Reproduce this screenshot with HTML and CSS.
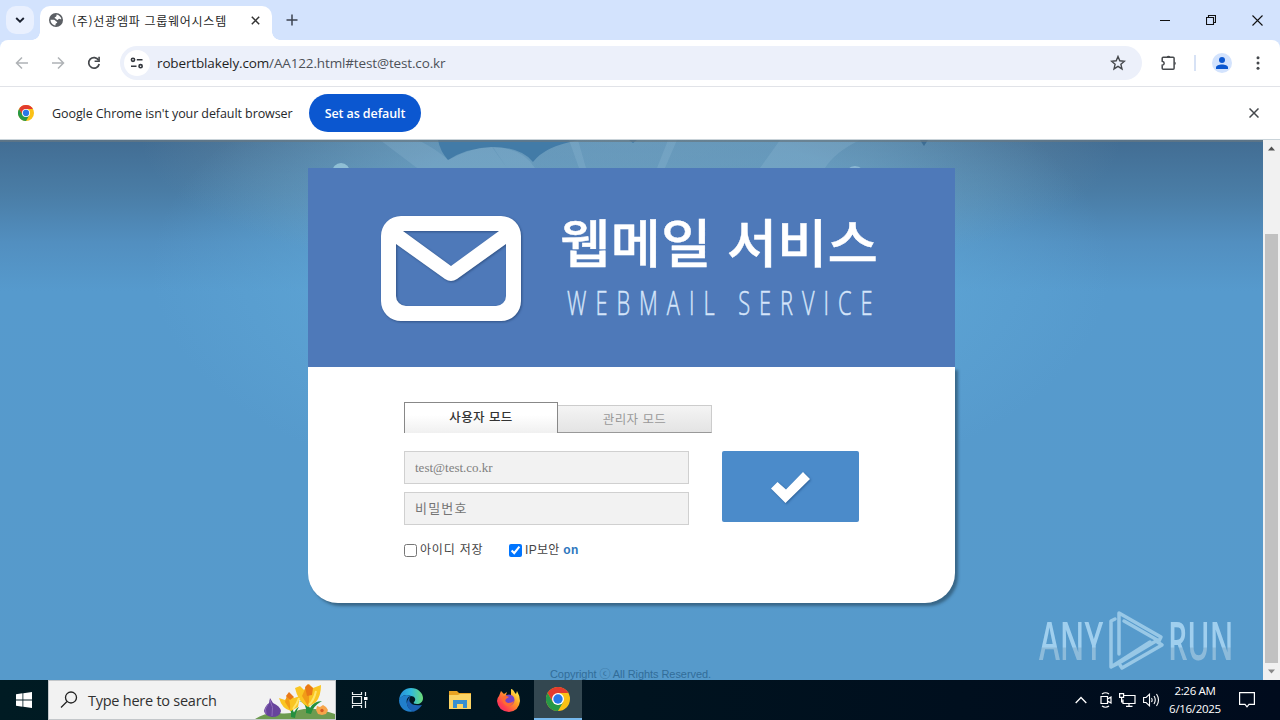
FILE: index.html
```html
<!DOCTYPE html>
<html lang="ko">
<head>
    <meta charset="UTF-8">
    <title>(주)선광엠파 그룹웨어시스템</title>
    <link rel="stylesheet" href="styles.css">
</head>
<body>
<div class="tabstrip">
    <div class="tab-search">
        <svg width="10" height="6" viewBox="0 0 10 6"><path d="M1.2 1l3.8 3.6L8.800 1" fill="none" stroke="#1b2230" stroke-width="1.900"/></svg>
    </div>
    <div class="tab">
        <svg class="globe" width="14" height="14" viewBox="0 0 14 14"><circle cx="7" cy="7" r="7" fill="#5b5f64"/><path d="M7.500 1.500C10 2 12 3.800 12.400 6.200c-1.200.3-1.600-.5-2.400-.4-.7 0-.4 1.200-1.500 1.200C7.300 7 7.500 5.700 6.300 5.500 5.500 5.300 5.400 4.300 6.300 4c1-.2 1.400-1.200 1.200-2.500zM1.500 6.700h3.300c1.400 0 1.500 1.500 2.600 1.700 1.200.3 1 1.600-.1 1.800-.8.2-.7 1.200-.9 2.200C3.600 12 1.500 9.600 1.500 6.700z" fill="#fff"/></svg>
        <span class="tab-title">(주)선광엠파 그룹웨어시스템</span>
        <svg width="9" height="9" viewBox="0 0 9 9"><path d="M.8.800l7.400 7.400M8.200.800L.8 8.200" stroke="#333" stroke-width="1.500"/></svg>
    </div>
    <svg class="new-tab" width="12" height="12" viewBox="0 0 12 12"><path d="M6 .5v11M.5 6h11" stroke="#3c4350" stroke-width="1.500"/></svg>
    <div class="window-buttons">
        <svg width="10" height="10" viewBox="0 0 10 10"><path d="M0 5.500h10" stroke="#111"/></svg>
        <svg width="10" height="10" viewBox="0 0 10 10"><path d="M.5 2.500h7v7h-7zM2.500 2.500v-2h7v7h-2" fill="none" stroke="#111" stroke-width="1.100"/></svg>
        <svg width="11" height="11" viewBox="0 0 11 11"><path d="M.5.500l10 10M10.500.500l-10 10" stroke="#111" stroke-width="1.100"/></svg>
    </div>
</div>
<div class="toolbar">
    <div class="nav">
        <svg width="14" height="14" viewBox="0 0 14 14"><path d="M7 1.500L1.500 7 7 12.500M1.500 7H13" fill="none" stroke="#afb2b6" stroke-width="1.500"/></svg>
        <svg width="14" height="14" viewBox="0 0 14 14"><path d="M7 1.500L12.500 7 7 12.500M12.500 7H1" fill="none" stroke="#afb2b6" stroke-width="1.500"/></svg>
        <svg width="14" height="14" viewBox="0 0 14 14"><path d="M11.600 4.200A5.300 5.300 0 1 0 12.200 8" fill="none" stroke="#45484c" stroke-width="1.700"/><path d="M12.900.800v5.300H7.600V4.500h3.700V.800z" fill="#45484c"/></svg>
    </div>
    <div class="address">
        <span class="site-info">
            <svg width="14" height="12" viewBox="0 0 14 12"><g fill="none" stroke="#33373d" stroke-width="1.600"><circle cx="3" cy="2.800" r="1.600"/><path d="M6.800 2.800h5.700M1 9.200h5.500"/><circle cx="10.600" cy="9.200" r="1.600"/></g></svg>
        </span>
        <span class="url">robertblakely.com<span>/AA122.html#test@test.co.kr</span></span>
        <svg width="16" height="16" viewBox="0 0 16 16"><path d="M8 1.500l1.800 4.300 4.700.4-3.600 3.100 1.100 4.600L8 11.400l-4 2.500 1.100-4.600L1.500 6.200l4.700-.4z" fill="none" stroke="#45484c" stroke-width="1.400"/></svg>
    </div>
    <svg class="puzzle" width="18" height="18" viewBox="0 0 18 18"><path d="M3.200 3.300h9.900c.6 0 1 .4 1 1v9.900c0 .6-.4 1-1 1H3.200c-.6 0-1-.4-1-1v-3c1.300-.2 2-1 2-2s-.7-1.800-2-2V4.300c0-.6.4-1 1-1z" fill="none" stroke="#45484c" stroke-width="1.500"/><path d="M6.700 3a1.900 1.900 0 0 1 3.600 0zM14.500 7.400a1.900 1.900 0 0 1 0 3.600z" fill="#45484c"/></svg>
    <span class="divider"></span>
    <svg class="avatar" width="20" height="20" viewBox="0 0 20 20"><circle cx="10" cy="10" r="10" fill="#d3e3fd"/><circle cx="10" cy="7" r="3" fill="#0b57d0"/><path d="M4 16v-1.500c0-4 12-4 12 0V16z" fill="#0b57d0"/></svg>
    <svg class="menu" width="4" height="14" viewBox="0 0 4 14"><g fill="#45484c"><circle cx="2" cy="1.700" r="1.500"/><circle cx="2" cy="7" r="1.500"/><circle cx="2" cy="12.300" r="1.500"/></g></svg>
</div>
<div class="infobar">
    <svg width="16" height="16" viewBox="0 0 24 24"><circle cx="12" cy="12" r="12" fill="#fbc116"/><path d="M1.600 6L6.800 15 12 6h10.400A12 12 0 0 0 1.600 6z" fill="#e33b2e"/><path d="M1.600 6L6.800 15l5.200 3 5.200-3L12 24A12 12 0 0 1 1.600 6z" fill="#279847"/><circle cx="12" cy="12" r="6" fill="#fff"/><circle cx="12" cy="12" r="4.700" fill="#2878e8"/></svg>
    <span class="info-text">Google Chrome isn't your default browser</span>
    <button class="default-btn">Set as default</button>
    <svg class="info-close" width="10" height="10" viewBox="0 0 10 10"><path d="M.5.500l9 9M9.500.500l-9 9" stroke="#45484c" stroke-width="1.500"/></svg>
</div>
<div class="viewport">
    <div class="page">
        <svg class="sky" width="1263" height="540" viewBox="0 0 1263 540">
            <defs>
                <linearGradient id="sky" x1="0" y1="0" x2="0" y2="1">
                    <stop offset="0" stop-color="#426d93"/>
                    <stop offset=".1" stop-color="#4a7da6"/>
                    <stop offset=".19" stop-color="#528fc0"/>
                    <stop offset=".28" stop-color="#569acd"/>
                    <stop offset="1" stop-color="#569acb"/>
                </linearGradient>
                <radialGradient id="glow" gradientUnits="userSpaceOnUse" cx="631" cy="130" r="480" gradientTransform="translate(0 65) scale(1 .5)">
                    <stop offset=".6" stop-color="#61a9d8" stop-opacity=".55"/>
                    <stop offset="1" stop-color="#61a9d8" stop-opacity="0"/>
                </radialGradient>
                <radialGradient id="haze" gradientUnits="userSpaceOnUse" cx="631" cy="0" r="490" gradientTransform="scale(1 .3)">
                    <stop offset="0" stop-color="#8babbd" stop-opacity=".38"/>
                    <stop offset=".5" stop-color="#86a8ba" stop-opacity=".34"/>
                    <stop offset=".8" stop-color="#80a3b5" stop-opacity=".18"/>
                    <stop offset="1" stop-color="#80a3b5" stop-opacity="0"/>
                </radialGradient>
            </defs>
            <rect width="1263" height="540" fill="url(#sky)"/>
            <rect width="1263" height="360" fill="url(#glow)"/>
            <rect width="1263" height="150" fill="url(#haze)"/>
            <path d="M438 0h54q-28 4-44 20-8-9-10-20zM492 0h87q-34 6-46 22-12-15-41-15-26 1-44 13 14-20 44-20zM629 0h8l-4 3z" fill="#427ba7"/>
            <g fill="#b5d6eb" opacity=".15">
                <path d="M380 0h38q20 10 30 20 24-13 44-13l15 21h-90zM493 7q30 1 42 21h-28zM569 0h9l8 28h-7zM668 0h9l-12 28h-8zM780 0h80q-25 12-35 28h-65z"/>
            </g>
            <circle cx="341" cy="32" r="9" fill="#a0cfe0" opacity=".75"/>
            <circle cx="855" cy="36" r="10" fill="#a5cde3" opacity=".6"/>
            <path d="M920 0h8l-4 6z" fill="#3d6d94"/>
            <rect width="1263" height="2" fill="#687782" opacity=".7"/>
        </svg>
        <div class="login">
            <div class="banner">
                <svg width="647" height="199" viewBox="0 0 647 199">
                    <g class="mail-icon">
                        <path fill-rule="evenodd" d="M93 48h100a20 20 0 0 1 20 20v65a20 20 0 0 1-20 20H93a20 20 0 0 1-20-20V68a20 20 0 0 1 20-20zM95 63l48 35 48-35zM88 76v52a10 10 0 0 0 10 10h90a10 10 0 0 0 10-10V76l-49 35q-6 4-12 0z" fill="#fff"/>
                    </g>
                    <text class="headline" x="252" y="95" textLength="318" lengthAdjust="spacingAndGlyphs">웹메일 서비스</text>
                    <text class="subline" transform="translate(259 147) scale(.66 1)" textLength="463">WEBMAIL SERVICE</text>
                </svg>
            </div>
            <form class="form">
                <div class="modes">
                    <a class="mode on">사용자 모드</a>
                    <a class="mode">관리자 모드</a>
                </div>
                <div class="fields">
                    <div class="inputs">
                        <input class="user-id" type="text" value="test@test.co.kr">
                        <input class="password" type="password" placeholder="비밀번호">
                    </div>
                    <button class="submit" type="button">
                        <svg width="40" height="32" viewBox="0 0 40 32"><path d="M0 17.500l6.500-6.500L15 18.500 32 1l7 7L14.500 32z" fill="#fff"/></svg>
                    </button>
                </div>
                <div class="options">
                    <label class="save-id"><input type="checkbox"><span>아이디 저장</span></label>
                    <label><input type="checkbox" checked><span>IP보안 <b>on</b></span></label>
                </div>
            </form>
        </div>
        <p class="copyright">Copyright ⓒ All Rights Reserved.</p>
        <svg class="watermark" width="204" height="90" viewBox="-4 -14 204 90">
            <defs>
                <linearGradient id="wm" x1="0" y1="0" x2="0" y2="1">
                    <stop offset=".6" stop-color="#a9d5f2"/>
                    <stop offset=".61" stop-color="#94bfdc"/>
                </linearGradient>
            </defs>
            <text transform="translate(2 50) scale(.6 1)" textLength="107" lengthAdjust="spacingAndGlyphs" fill="url(#wm)">ANY</text>
            <text transform="translate(131 50) scale(.6 1)" textLength="109" lengthAdjust="spacingAndGlyphs" fill="url(#wm)">RUN</text>
            <g fill="none" stroke="#a0cdea" stroke-width="3.500" stroke-linejoin="round" stroke-linecap="round">
                <path d="M82 44V3l42 24-2 4-35-20"/>
                <path d="M78 9l-4 2v46l39-25M74 57l8-4 37-22 6 4-40 23-2-3"/>
            </g>
        </svg>
    </div>
    <div class="scrollbar">
        <svg width="17" height="17" viewBox="0 0 17 17"><path d="M5 10.500l3.500-4 3.500 4z" fill="#505050"/></svg>
        <div class="thumb"></div>
        <svg width="17" height="17" viewBox="0 0 17 17"><path d="M5 6.500l3.500 4 3.500-4z" fill="#888"/></svg>
    </div>
</div>
<div class="taskbar">
    <div class="start">
        <svg width="16" height="16" viewBox="0 0 16 16"><path d="M0 2.200l6.500-.9v6.300H0zM7.300 1.200L16 0v7.600H7.300zM0 8.400h6.500v6.300L0 13.800zM7.300 8.400H16V16l-8.700-1.200z" fill="#fff"/></svg>
    </div>
    <div class="search">
        <svg width="18" height="18" viewBox="0 0 18 18"><circle cx="11" cy="6.500" r="5.500" fill="none" stroke="#222" stroke-width="1.300"/><path d="M7 10.500L1 16.500" stroke="#222" stroke-width="1.300"/></svg>
        <span>Type here to search</span>
        <svg class="flowers" width="80" height="38" viewBox="0 0 80 38">
            <path d="M0 38q10-7 24-6 10 2 20-3 14-4 36 4v5z" fill="#6d9b50"/>
            <path d="M15 17l3 5q7 3 8 8-1 6-9 6-7-1-8-6 1-5 5-8z" fill="#67449c"/>
            <path d="M15 19q4 7 2 16M13 23q-4 5-2 10" fill="none" stroke="#8e6cba"/>
            <path d="M36 36q1-8-5-10 7 0 8 6 2-5 5-6-3 4-4 11zM51 32q1-10-7-12 9 1 11 7 4-7 12-7-9 5-11 13z" fill="#25903f"/>
            <path d="M24 17l6 2 5-6 4 4 6-2-2 11-7 4q-9-2-12-13zM40 7l5-2 4 4 5-6 4 4 8-3q0 11-5 17l-8 5q-10-5-13-19z" fill="#fac522"/>
            <path d="M32 14q4 7 3 15l-5-8zM52 4q4 10 1 21l-6-10z" fill="#f19b17"/>
            <path d="M31 15l3-4 5 5-4 3zM50 6l3-3 5 4-1 7-5 1z" fill="#e97817"/>
            <path d="M61 10q-2 9-7 14M44 17q-2 6-6 11" fill="none" stroke="#ffe56a" stroke-width="2"/>
            <path d="M62 25l3 1 3-2 3 2 2 3-2 4-4 1-4-1-2-4z" fill="#f7a54a"/><circle cx="67" cy="29.500" r="1.700" fill="#d65c21"/>
        </svg>
    </div>
    <div class="task">
        <svg width="18" height="16" viewBox="0 0 18 16"><path d="M1.500 0v2.500h9V0M1.500 16v-2.500h9V16M1.500 4.500h9v7h-9zM14.500 0v4M14.500 9v7" fill="none" stroke="#e9eeee" stroke-width="1.200"/><path d="M13 5h3.500v3H13z" fill="#fff"/></svg>
    </div>
    <div class="task edge">
        <svg width="24" height="24" viewBox="0 0 24 24">
            <defs>
                <linearGradient id="edge" x1="0" y1="0" x2="1" y2="0"><stop stop-color="#258edc"/><stop offset=".5" stop-color="#31b9dd"/><stop offset="1" stop-color="#6bdc76"/></linearGradient>
            </defs>
            <path d="M0 12C1 4 6 0 12 0c7 0 12 5 12 10 0 4-3 6-6 6s-4-1-3-2c3-3 0-6-3-6C7 6 3 7 0 12z" fill="url(#edge)"/>
            <path d="M0 12c2-5 8-6 12-4-4 1-5 4-4 8 1 5 5 7 8 7C7 26 0 20 0 12z" fill="#217fcb"/>
            <path d="M12 8c-4 4-1 11 11 9-2 3-4 5-8 6.500C8 22 5 13 12 8z" fill="#1b62b5"/>
        </svg>
    </div>
    <div class="task">
        <svg width="22" height="20" viewBox="0 0 22 20"><path d="M0 1h8l2 2h12v4H0z" fill="#e8a323"/><path d="M0 5h9l2-1h11v15H0z" fill="#fbd465"/><path d="M4 10h14v8h-4v-4H8v4H4z" fill="#368fd0"/></svg>
    </div>
    <div class="task">
        <svg width="24" height="24" viewBox="0 0 24 24">
            <defs><linearGradient id="fox" x1="1" y1="0" x2="0" y2="1"><stop offset=".1" stop-color="#fff04a"/><stop offset=".4" stop-color="#ff9b25"/><stop offset=".75" stop-color="#ff3c50"/><stop offset="1" stop-color="#e12783"/></linearGradient></defs>
            <path d="M2 8l2-5 3 3 3-2-1 3 5 0 0-6q2 0 4 4l1 1 1-3q3 5 3 10-1 10-11 11Q1 23 0 13q0-3 2-5z" fill="url(#fox)"/>
            <circle cx="12" cy="12" r="5.500" fill="#7544c8"/><path d="M5 9q4-2 7 0l-3 2q-2 3 2 4 4 0 6-2-2 6-7 5-5-2-5-9z" fill="#ff6a32"/>
        </svg>
    </div>
    <div class="task active">
        <svg width="24" height="24" viewBox="0 0 24 24"><circle cx="12" cy="12" r="12" fill="#fbc116"/><path d="M1.600 6L6.800 15 12 6h10.400A12 12 0 0 0 1.600 6z" fill="#e33b2e"/><path d="M1.600 6L6.800 15l5.200 3 5.200-3L12 24A12 12 0 0 1 1.600 6z" fill="#279847"/><circle cx="12" cy="12" r="6" fill="#fff"/><circle cx="12" cy="12" r="4.700" fill="#2878e8"/></svg>
    </div>
    <div class="tray">
        <svg width="12" height="8" viewBox="0 0 12 8"><path d="M.7 7L6 1.500 11.300 7" fill="none" stroke="#fff" stroke-width="1.300"/></svg>
        <svg class="camera" width="12" height="16" viewBox="0 0 12 16"><path d="M1 4.500h6.500v7H1zM7.500 7L11 5v6l-3.500-2M2 2q3.500-2.500 7 0M2 14q3.500 2.500 7 0" fill="none" stroke="#fff" stroke-width="1.200"/></svg>
        <svg width="17" height="14" viewBox="0 0 17 14"><path d="M5 2.500h11v8H4v-4M10 10.500V13M7 13.400h6.500M.6.600h4v3.800h-4zM2.600 4.400V9H4" fill="none" stroke="#fff" stroke-width="1.200"/></svg>
        <svg width="17" height="14" viewBox="0 0 17 14"><path d="M.6 4.500h2.500L6.500 1.200v11.600L3.100 9.500H.6zM8.500 5q1.300 2 0 4M11 3q2.500 4 0 8M13.500 1q4 6 0 12" fill="none" stroke="#fff" stroke-width="1.100"/></svg>
        <div class="clock"><span>2:26 AM</span><span>6/16/2025</span></div>
        <svg width="16" height="16" viewBox="0 0 16 16"><path d="M.6.600h14.800v11.800H10L8 14.800l-2-2.400H.6z" fill="none" stroke="#fff" stroke-width="1.200"/></svg>
    </div>
</div>
</body>
</html>
```
FILE: styles.css
```css
*{
    margin:0;
    padding:0;
    box-sizing: border-box;
}
body{
    width:1280px;
    height:720px;
    overflow: hidden;
    display: flex;
    flex-direction: column;
    font-family: "Open Sans","Noto Sans CJK KR",sans-serif;
    background: #d3e3fd;
}
svg{
    display: block;
    flex-shrink: 0;
}
/* 브라우저 탭 */
.tabstrip{
    height:40px;
    background: #d3e3fd;
    display: flex;
    align-items: center;
    padding-left:6px;
}
.tab-search{
    width:28px;
    height:28px;
    border-radius: 10px;
    background: #e9f0fe;
    display: flex;
    align-items: center;
    justify-content: center;
}
.tab{
    width:232px;
    height:34px;
    margin:6px 0 0 6px;
    padding:0 12px 6px 9px;
    border-radius: 10px 10px 0 0;
    background: #fff;
    display: flex;
    align-items: center;
    position: relative;
}
/* 탭 아래쪽 둥근 모서리 */
.tab::before,.tab::after{
    content:"";
    position: absolute;
    bottom:0;
    width:8px;
    height:8px;
}
.tab::before{
    left:-8px;
    background: radial-gradient(circle at 0 0,transparent 7.500px,#fff 8px);
}
.tab::after{
    right:-8px;
    background: radial-gradient(circle at 100% 0,transparent 7.500px,#fff 8px);
}
.tab-title{
    flex:1;
    margin-left:9px;
    font-family: "Noto Sans CJK KR",sans-serif;
    font-size: 12px;
    letter-spacing: .73px;
    color: #1f1f1f;
    white-space: nowrap;
}
.new-tab{
    margin-left:14px;
}
.window-buttons{
    margin-left:auto;
    padding-right:17px;
    display: flex;
    gap:36px;
}
/* 주소 표시줄 */
.toolbar{
    height:47px;
    border-bottom:solid 1px #e1e3e8;
    border-radius: 8px 8px 0 0;
    background: #fff;
    display: flex;
    align-items: center;
}
.nav{
    width:120px;
    padding-left:15px;
    display: flex;
    gap:22px;
}
.address{
    width:1022px;
    height:34px;
    border-radius: 17px;
    background: #ecf0fa;
    padding:0 16px 0 4px;
    display: flex;
    align-items: center;
}
.site-info{
    width:26px;
    height:26px;
    border-radius: 13px;
    background: #fff;
    display: flex;
    align-items: center;
    justify-content: center;
}
.url{
    flex:1;
    margin-left:7px;
    font-size: 13.500px;
    letter-spacing: -.14px;
    color: #1f1f1f;
}
.url span{
    color: #4c5058;
}
.puzzle{
    margin-left:18px;
}
.divider{
    width:2px;
    height:16px;
    margin-left:16px;
    background: #d7e2f5;
}
.avatar{
    margin-left:16px;
}
.menu{
    margin-left:24px;
}
.infobar{
    height:53px;
    border-bottom:solid 1px #c9d3d9;
    background: #fff;
    padding:0 21px 0 18px;
    display: flex;
    align-items: center;
}
.info-text{
    width:275px;
    padding-left:18px;
    font-size: 12.500px;
    letter-spacing: -.08px;
    color: #26282b;
    white-space: nowrap;
}
.default-btn{
    width:112px;
    height:38px;
    border:none;
    border-radius: 19px;
    background: #0b57d0;
    color: #fff;
    font: 600 12.500px "Open Sans",sans-serif;
    letter-spacing: -.1px;
}
.info-close{
    margin-left:auto;
}
/* 로그인 페이지 */
.viewport{
    height:540px;
    display: flex;
}
.page{
    width:1263px;
    height:540px;
    position: relative;
    overflow: hidden;
    padding-top:28px;
}
.sky{
    position: absolute;
    top:0;
    left:0;
}
.login{
    width:647px;
    height:435px;
    margin-left:308px;
    position: relative;
}
.banner{
    height:199px;
    background: #4e79b9;
}
.mail-icon{
    filter: drop-shadow(1px 1px 1px rgba(20,45,85,.5));
}
.headline{
    font: 500 52px "Noto Sans CJK KR",sans-serif;
    fill: #fff;
    stroke: #fff;
    stroke-width: .4px;
}
.subline{
    font: 300 33px "Open Sans",sans-serif;
    fill: #d5e5fa;
    stroke: #d5e5fa;
    stroke-width: .5px;
}
.form{
    height:236px;
    padding:35px 96px 0;
    border-radius: 0 0 30px 30px;
    background: #fff;
    box-shadow: 3px 3px 3px rgba(40,75,100,.65);
    font-family: "Liberation Sans","Noto Sans CJK KR",sans-serif;
    font-size: 12px;
}
.modes{
    display: flex;
    align-items: flex-end;
}
.mode{
    width:154px;
    height:28px;
    border:solid 1px #ccc;
    border-left:none;
    border-bottom-color: #999;
    background: linear-gradient(#f4f4f4,#e4e4e4);
    color: #999;
    font-size: 12.500px;
    letter-spacing: .4px;
    line-height: 28px;
    text-align: center;
}
.mode.on{
    height:31px;
    border:solid 1px #888;
    border-bottom:none;
    background: linear-gradient(#fff 40%,#f0f0f0);
    color: #333;
    font-weight: 500;
    font-family: "Noto Sans CJK KR",sans-serif;
}
.fields{
    margin-top:18px;
    display: flex;
    align-items: flex-start;
    gap:33px;
}
.inputs{
    display: flex;
    flex-direction: column;
    gap:8px;
}
.inputs input{
    width:285px;
    height:33px;
    border:solid 1px #d0d0d0;
    background: #f2f2f2;
    padding:0 10px;
    color: #808080;
    outline: none;
}
.inputs .user-id{
    font: 13px "Liberation Serif",serif;
}
.inputs .password{
    padding-bottom:3px;
    font: 13px "Noto Sans CJK KR",sans-serif;
    letter-spacing: 1.200px;
}
.password::placeholder{
    color: #757575;
}
.submit{
    width:137px;
    height:71px;
    border:none;
    border-radius: 2px;
    background: #4b8bca;
    display: flex;
    align-items: center;
    justify-content: center;
}
.submit svg{
    filter: drop-shadow(1px 1px 1px rgba(20,60,110,.5));
}
.options{
    margin-top:16px;
    height:18px;
    display: flex;
    color: #444;
}
.options label{
    display: flex;
    align-items: center;
    letter-spacing: .3px;
}
.options input{
    width:13px;
    height:13px;
    margin-right:3px;
}
.options span{
    padding-bottom:3px;
    white-space: nowrap;
}
.options .save-id{
    width:105px;
    letter-spacing: .8px;
}
.options b{
    color: #2d77bd;
}
.copyright{
    position: relative;
    margin-top:63px;
    padding-left:550px;
    font: 11px/16px "Liberation Sans","Noto Sans CJK KR",sans-serif;
    letter-spacing: -.07px;
    color: #326d99;
}
.watermark{
    position: absolute;
    left:1033px;
    top:456px;
    opacity: .9;
}
.watermark text{
    font: 600 52px "Open Sans",sans-serif;
}
.scrollbar{
    width:17px;
    background: #f1f1f1;
    display: flex;
    flex-direction: column;
}
.thumb{
    width:13px;
    height:429px;
    margin:77px 2px 0;
    background: #c1c1c1;
}
/* 작업 표시줄 */
.taskbar{
    height:40px;
    background: linear-gradient(90deg,#001b23,#00131f 50%,#000b1d);
    display: flex;
}
.start{
    width:48px;
    display: flex;
    align-items: center;
    justify-content: center;
}
.search{
    width:288px;
    border:solid 1px #c3c7ca;
    background: #f2f2f2;
    padding-left:11px;
    display: flex;
    align-items: center;
    color: #303030;
    font-size: 14.500px;
    letter-spacing: -.25px;
}
.search span{
    width:169px;
    margin-left:10px;
    white-space: nowrap;
}
.task{
    width:48px;
    margin-right:1px;
    display: flex;
    align-items: center;
    justify-content: center;
}
.task.edge{
    margin-left:2px;
}
.task.active{
    background: #334750;
    border-bottom:solid 2px #76b9ed;
}
.tray{
    margin-left:auto;
    padding-right:25px;
    display: flex;
    align-items: center;
    gap:7px;
}
.tray .camera{
    margin-left:6px;
}
.clock{
    width:56px;
    margin:0 9px 0 0;
    display: flex;
    flex-direction: column;
    align-items: center;
    color: #fff;
    font-size: 11.500px;
    line-height: 18px;
    white-space: nowrap;
    letter-spacing: -.3px;
}
```
